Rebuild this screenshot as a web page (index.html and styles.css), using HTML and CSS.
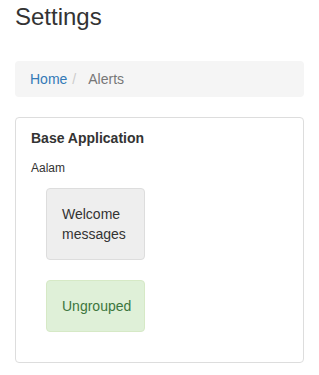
FILE: index.html
```html
<!DOCTYPE html>
<html>
	<head>
		<title>Settings</title>
		<meta charset="UTF-8">
		<link rel="stylesheet" href="styles.css">
	</head>
	<body>
		<div class='page'>
			<h3 class='pageTitle'>Settings</h3>
			<div class='crumbs'>
				<a href='#'>Home</a>
				<span class='sep'>/</span>
				<span class='current'>Alerts</span>
			</div>
			<div class='panel'>
				<div class='panelHead'>Base Application</div>
				<div class='panelBody'>
					<div class='appName'>Aalam</div>
					<div class='groups'>
						<div class='group'>Welcome messages</div>
						<div class='group ungrouped'>Ungrouped</div>
					</div>
				</div>
			</div>
		</div>
	</body>
</html>
```

FILE: styles.css
```css
*{
	box-sizing:border-box;
}
body{
	margin:0;
	font-family:"Liberation Sans", Arial, sans-serif;
	font-size:14px;
	line-height:20px;
	color:#333;
	background-color:#fff;
}
.page{
	padding:0 15px;
}
.pageTitle{
	margin:4px 0 31px;
	font-size:24px;
	line-height:26px;
	font-weight:normal;
}
.crumbs{
	display:flex;
	padding:8px 15px;
	margin-bottom:20px;
	background-color:#f5f5f5;
	border-radius:4px;
}
.crumbs a{
	color:#337ab7;
	text-decoration:none;
}
.crumbs .sep{
	color:#ccc;
	padding:0 12px 0 5px;
}
.crumbs .current{
	color:#777;
}
.panel{
	border:1px solid #ddd;
	border-radius:4px;
}
.panelHead{
	padding:10px 15px;
	font-weight:bold;
}
.panelBody{
	padding:2px 15px 30px;
}
.appName{
	font-size:12px;
	line-height:17px;
}
.groups{
	display:flex;
	flex-direction:column;
	align-items:flex-start;
	gap:20px;
	margin:11px 0 0 15px;
}
.group{
	width:99px;
	padding:15px;
	background-color:#eee;
	border:1px solid #ddd;
	border-radius:4px;
}
.group.ungrouped{
	background-color:#dff0d8;
	border-color:#d6e9c6;
	color:#3c763d;
	white-space:nowrap;
}
```
